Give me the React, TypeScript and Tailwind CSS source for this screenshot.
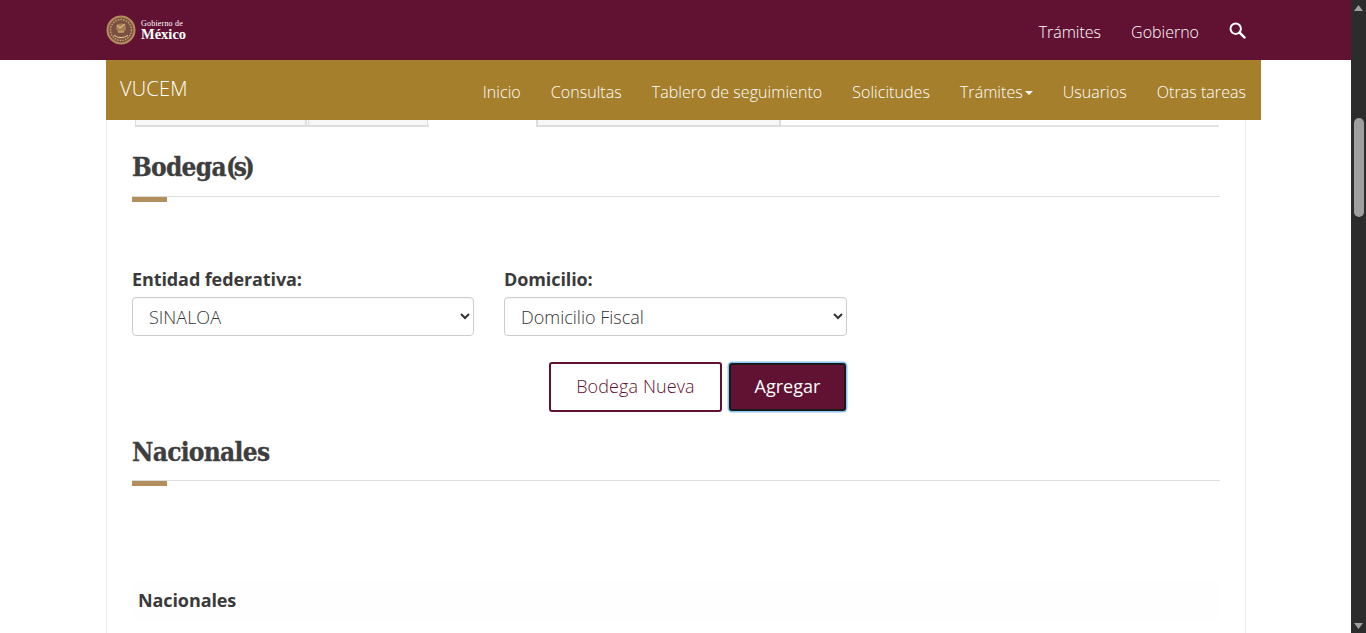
import type { ReactNode } from "react";

const navItems = ["Inicio", "Consultas", "Tablero de seguimiento", "Solicitudes", "Trámites", "Usuarios", "Otras tareas"];

function Emblem() {
  return (
    <svg width="30" height="30" viewBox="0 0 30 30" className="shrink-0">
      <circle cx="15" cy="15" r="13.5" fill="#7a5140" stroke="#b38e5d" strokeWidth="2" />
      <circle cx="15" cy="15" r="10.5" fill="none" stroke="#c9a26f" strokeWidth="1.4" strokeDasharray="1.5 1.2" />
      <ellipse cx="15" cy="13" rx="5" ry="4.5" fill="#a67c52" />
      <path d="M8 20c3 3.5 11 3.5 14 0M11 10l3 3 5-4M12 17l6 0" fill="none" stroke="#d8b98c" strokeWidth="1.1" />
    </svg>
  );
}

function SectionTitle({ children, leading }: { children: ReactNode; leading: string }) {
  return (
    <div>
      <h2 className={`h-[49px] font-['DejaVu_Serif',serif] text-[26px] font-bold tracking-[-0.7px] text-[#3e3e3e] [font-stretch:condensed] [-webkit-text-stroke:0.3px_#3e3e3e] ${leading}`}>
        {children}
      </h2>
      <div className="h-px bg-[#dddddd]" />
      <div className="h-[5px] w-[35px] bg-[#b38e5d]" />
    </div>
  );
}

function Field({ label, value, width }: { label: string; value: string; width: string }) {
  return (
    <div className={width}>
      <label className="mb-[5px] block text-[18px] leading-[26px] font-bold tracking-[-0.1px] text-[#3a3a3a]">{label}</label>
      <select
        defaultValue={value}
        className="h-[39px] w-full rounded-[4px] border border-[#cccccc] bg-white pr-[3px] pl-[12px] text-[18px] font-light text-[#333333] shadow-[inset_0_1px_1px_rgba(0,0,0,0.04)]"
      >
        <option>{value}</option>
      </select>
    </div>
  );
}

function Scrollbar() {
  return (
    <div className="flex h-[633px] w-[15px] shrink-0 flex-col items-center bg-[#2c2c2c]">
      <svg width="15" height="15" viewBox="0 0 15 15" className="shrink-0">
        <path d="M7.5 5 L12 11 L3 11 Z" fill="#a0a0a0" />
      </svg>
      <div className="mt-[103px] h-[99px] w-[10px] shrink-0 rounded-[5px] bg-[#9f9f9f]" />
      <div className="flex-1" />
      <svg width="15" height="15" viewBox="0 0 15 15" className="shrink-0">
        <path d="M3 5 L12 5 L7.5 11 Z" fill="#a0a0a0" />
      </svg>
    </div>
  );
}

export default function App() {
  return (
    <div className="flex h-[633px] overflow-hidden bg-white font-['Open_Sans',sans-serif]">
      <div className="min-w-0 flex-1">
        <header className="flex h-[60px] items-center justify-between bg-[#611232] pr-[105px] pl-[106px] text-white">
          <div className="flex items-center gap-[5px]">
            <Emblem />
            <div className="font-['Liberation_Serif',serif] leading-none">
              <div className="text-[8px] leading-[9px] tracking-[0.2px]">Gobierno de</div>
              <div className="text-[14.5px] leading-[13px] font-bold">México</div>
            </div>
          </div>
          <div className="flex items-center gap-[30px] pt-[3px] text-[16px] leading-[22px] font-light">
            <span>Trámites</span>
            <span>Gobierno</span>
            <svg width="17" height="17" viewBox="0 0 17 17" className="mb-[3px]">
              <circle cx="6.7" cy="6.7" r="5.2" fill="none" stroke="white" strokeWidth="2" />
              <path d="M10.6 10.6 L15.4 15.4" stroke="white" strokeWidth="2.6" strokeLinecap="round" />
            </svg>
          </div>
        </header>

        <div className="ml-[106px] flex h-[60px] w-[1155px] justify-between bg-[#a57f2c] pr-[15px] pl-[14px] text-white">
          <span className="pt-[15px] text-[20px] leading-[27px] font-light tracking-[0.2px]">VUCEM</span>
          <nav className="flex gap-[30px] pt-[21px] text-[16px] leading-[22px] font-light tracking-[0.05px]">
            {navItems.map((item) => (
              <span key={item} className="flex h-[22px] items-center">
                {item}
                {item === "Trámites" && (
                  <span className="mt-[2px] ml-[2px] border-x-[4px] border-t-[4px] border-x-transparent border-t-white" />
                )}
              </span>
            ))}
          </nav>
        </div>

        <main className="ml-[106px] h-[513px] w-[1140px] border-x border-[#eeeeee] pr-[25px] pl-[25px]">
          <div className="ml-[3px] flex h-[7px] w-[1084px]">
            <div className="flex w-[294px] border-b-2 border-l border-[#dddddd]">
              <div className="w-[171px] border-r-2 border-[#dddddd] bg-[#f7f7f7]" />
              <div className="ml-[1px] w-[120px] border-x border-[#dddddd] bg-[#f7f7f7]" />
            </div>
            <div className="w-[107px]" />
            <div className="w-[245px] border-x-2 border-b-2 border-[#dddddd] bg-[#f7f7f7]" />
            <div className="flex-1 border-b-2 border-[#e4e4e4]" />
          </div>

          <div className="pt-[20px]">
            <SectionTitle leading="leading-[40px]">
              Bodega<span className="tracking-[-3.2px]">(s)</span>
            </SectionTitle>
          </div>

          <div className="mt-[64px] flex gap-[30px]">
            <Field label="Entidad federativa:" value="SINALOA" width="w-[342px]" />
            <Field label="Domicilio:" value="Domicilio Fiscal" width="w-[343px]" />
          </div>

          <div className="mt-[26px] ml-[417px] flex gap-[6px]">
            <button className="h-[50px] w-[173px] rounded-[3px] border-2 border-[#611232] bg-white pb-[2px] text-[18px] font-light tracking-[0.1px] text-[#611232]">
              Bodega Nueva
            </button>
            <button className="m-[1px] h-[48px] w-[117px] rounded-[3px] border-2 border-[#1a1a1a] bg-[#611232] pb-[2px] text-[18px] text-white shadow-[0_0_0_1.5px_#8cc4f5]">
              Agregar
            </button>
          </div>

          <div className="mt-[19px]">
            <SectionTitle leading="leading-[42px]">Nacionales</SectionTitle>
          </div>

          <div className="mt-[96px] h-[39px] w-[1088px] bg-[#fefefe] pl-[6px] text-[18px] leading-[36px] font-bold tracking-[-0.1px] text-[#3a3a3a]">
            Nacionales
          </div>
        </main>
      </div>
      <Scrollbar />
    </div>
  );
}
